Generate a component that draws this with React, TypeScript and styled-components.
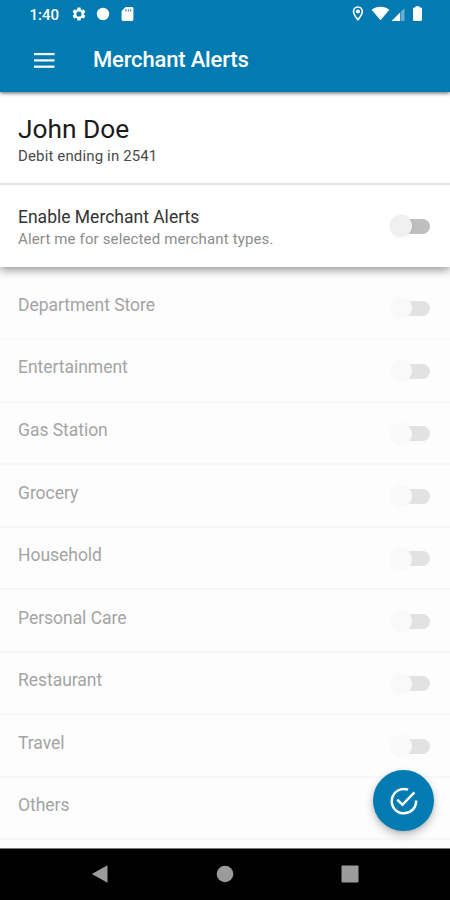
import React from "react";
import styled, { createGlobalStyle } from "styled-components";

const GlobalStyle = createGlobalStyle`
  * { box-sizing: border-box; }
  html, body { margin: 0; padding: 0; }
  body { font-family: Roboto, "Liberation Sans", sans-serif; background: #fff; }
`;

const BLUE = "#027bb2";

const Screen = styled.div`
  width: 450px;
  height: 900px;
  display: flex;
  flex-direction: column;
  overflow: hidden;
  background: #fefefe;
  position: relative;
`;

const Header = styled.header`
  height: 92px;
  flex: none;
  background: ${BLUE};
  color: #fff;
  box-shadow: 0 1px 4px rgba(0, 0, 0, 0.65);
  position: relative;
  z-index: 4;
`;

const StatusBar = styled.div`
  height: 28px;
  display: flex;
  align-items: center;
  padding: 0 27px 0 29.5px;
`;

const Clock = styled.span`
  width: 42.5px;
  font-size: 15px;
  font-weight: 500;
  line-height: 28px;
  padding-top: 1px;
`;

const StatusIcons = styled.div<{ $end?: boolean }>`
  display: flex;
  align-items: center;
  margin-left: ${(p) => (p.$end ? "auto" : "0")};
`;

const Toolbar = styled.div`
  height: 64px;
  display: flex;
  align-items: center;
  padding: 0 34px 1px;
`;

const MenuButton = styled.button`
  width: 59px;
  height: 24px;
  padding: 0;
  border: 0;
  background: none;
  color: inherit;
  text-align: left;
  line-height: 0;
`;

const Title = styled.h1`
  margin: 0;
  font-size: 22px;
  font-weight: 500;
  line-height: 28px;
  letter-spacing: -0.17px;
`;

const Account = styled.section`
  height: 91px;
  flex: none;
  padding: 20px 18px 0;
  background: #fff;
  position: relative;
  z-index: 3;
`;

const Name = styled.h2`
  margin: 0;
  font-size: 26.3px;
  font-weight: 400;
  line-height: 34px;
  color: #1c1c1c;
`;

const CardInfo = styled.p`
  margin: 0;
  font-size: 15px;
  line-height: 20px;
  letter-spacing: 0.14px;
  color: #4a4a4a;
`;

const EnableCard = styled.section`
  height: 84px;
  flex: none;
  display: flex;
  align-items: center;
  justify-content: space-between;
  padding: 0 20px 0 18px;
  border-top: 2px solid #e2e2e2;
  background: #fff;
  box-shadow: 0 3px 9px rgba(0, 0, 0, 0.42);
  position: relative;
  z-index: 2;
`;

const EnableText = styled.div`
  padding-top: 4px;
`;

const EnableTitle = styled.div`
  font-size: 17.5px;
  line-height: 22px;
  color: #333;
`;

const EnableHint = styled.div`
  font-size: 15px;
  line-height: 22px;
  letter-spacing: 0.14px;
  color: #8c8c8c;
`;

const Track = styled.div<{ $dim?: boolean }>`
  width: 40px;
  height: 22px;
  display: flex;
  align-items: center;
  flex: none;
  opacity: ${(p) => (p.$dim ? 0.5 : 1)};

  &::before {
    content: "";
    width: 22px;
    height: 22px;
    border-radius: 50%;
    background: ${(p) => (p.$dim ? "#f6f6f6" : "#f0f0f0")};
    box-shadow: 0 0 2px rgba(0, 0, 0, ${(p) => (p.$dim ? 0.03 : 0.1)});
    z-index: 1;
  }

  &::after {
    content: "";
    width: 27px;
    height: 15px;
    margin-left: -9px;
    border-radius: 8px;
    background: ${(p) => (p.$dim ? "#c8c8c8" : "#bebebe")};
  }
`;

const List = styled.ul`
  margin: 0;
  padding: 10.5px 0 0;
  list-style: none;
  flex: 1;
  background: #fdfdfd;
`;

const Row = styled.li`
  height: 62.55px;
  display: flex;
  justify-content: space-between;
  padding: 16.4px 20px 0 18px;
  background: #fdfdfd;
  border-bottom: 2px solid #f7f7f7;

  &:first-child {
    border-bottom-color: #fafafa;
  }

  ${Track} {
    margin-top: 3.6px;
  }
`;

const Category = styled.span`
  font-size: 17.5px;
  line-height: 22px;
  letter-spacing: -0.03px;
  color: #a4a4a4;
`;

const SaveButton = styled.button`
  position: absolute;
  right: 16px;
  bottom: 69px;
  width: 61px;
  height: 61px;
  border: 0;
  padding: 0;
  border-radius: 50%;
  background: ${BLUE};
  display: flex;
  align-items: center;
  justify-content: center;
  box-shadow: 0 4px 8px rgba(0, 0, 0, 0.25), 0 1px 3px rgba(0, 0, 0, 0.1);
  z-index: 4;
`;

const NavBar = styled.nav`
  height: 52px;
  flex: none;
  display: flex;
  align-items: center;
  justify-content: space-between;
  padding: 0 91px 1px;
  background: #000;
  border-top: 1px solid #777;
  position: relative;
  z-index: 3;
`;

const categories = [
  "Department Store",
  "Entertainment",
  "Gas Station",
  "Grocery",
  "Household",
  "Personal Care",
  "Restaurant",
  "Travel",
  "Others",
];

const StatusLeft = () => (
  <svg width="64" height="18" viewBox="0 0 64 18" fill="#fff">
    <g transform="translate(-1.2 0.8) scale(0.68)">
      <path
        fillRule="evenodd"
        d="M19.14 12.94c.04-.3.06-.61.06-.94s-.02-.64-.07-.94l2.03-1.58a.5.5 0 0 0 .12-.61l-1.92-3.32a.49.49 0 0 0-.59-.22l-2.39.96a7 7 0 0 0-1.62-.94l-.36-2.54a.48.48 0 0 0-.48-.41h-3.84a.47.47 0 0 0-.47.41l-.36 2.54c-.59.24-1.13.57-1.62.94l-2.39-.96a.48.48 0 0 0-.59.22L2.74 8.87a.47.47 0 0 0 .12.61l2.03 1.58a6 6 0 0 0-.02 1.88l-2.03 1.58a.5.5 0 0 0-.12.61l1.92 3.32c.12.22.37.29.59.22l2.39-.96c.5.38 1.03.7 1.62.94l.36 2.54c.05.24.24.41.48.41h3.84c.24 0 .44-.17.47-.41l.36-2.54c.59-.24 1.13-.56 1.62-.94l2.39.96c.22.08.47 0 .59-.22l1.92-3.32a.47.47 0 0 0-.12-.61zM12 15.8a3.8 3.8 0 1 1 0-7.6 3.8 3.8 0 0 1 0 7.6z"
      />
    </g>
    <circle cx="31" cy="9" r="6.2" />
    <path
      fillRule="evenodd"
      d="M53.6 2H60q1.4 0 1.4 1.4v11.2q0 1.4-1.4 1.4h-9q-1.4 0-1.4-1.4V6zM53.4 4.2h1v2.400h-1zm2.400 0h1v2.400h-1zm2.400 0h1v2.400h-1z"
    />
  </svg>
);

const StatusRight = () => (
  <svg width="71" height="18" viewBox="0 0 71 18" fill="#fff">
    <path
      d="M5.900 2C3.200 2 1.500 4 1.500 6.500c0 3 4.400 8.300 4.400 8.300s4.400-5.300 4.400-8.300C10.300 4 8.600 2 5.900 2z"
      fill="none"
      stroke="#fff"
      strokeWidth="1.600"
    />
    <circle cx="5.900" cy="6.500" r="2.100" />
    <path d="M19.600 4.800C24.500.700 32.500.700 37.400 4.800L28.500 15.200z" />
    <path d="M39.500 16L48 7.500V16z" />
    <path d="M48.600 7L52.500 3.200V16h-3.900z" opacity=".4" />
    <path d="M63.500 1.200h4v1.300h1q1.500 0 1.500 1.400v10.500q0 1.600-1.500 1.600h-6q-1.500 0-1.500-1.600V3.900q0-1.400 1.500-1.400h1z" />
  </svg>
);

const App = () => (
  <Screen>
    <GlobalStyle />
    <Header>
      <StatusBar>
        <Clock>1:40</Clock>
        <StatusIcons>
          <StatusLeft />
        </StatusIcons>
        <StatusIcons $end>
          <StatusRight />
        </StatusIcons>
      </StatusBar>
      <Toolbar>
        <MenuButton aria-label="Menu">
          <svg width="21" height="24" viewBox="0 0 21 24" fill="#fff">
            <rect y="5" width="20.500" height="2.200" />
            <rect y="11.300" width="20.500" height="2.200" />
            <rect y="17.600" width="20.500" height="2.200" />
          </svg>
        </MenuButton>
        <Title>Merchant Alerts</Title>
      </Toolbar>
    </Header>
    <Account>
      <Name>John Doe</Name>
      <CardInfo>Debit ending in 2541</CardInfo>
    </Account>
    <EnableCard>
      <EnableText>
        <EnableTitle>Enable Merchant Alerts</EnableTitle>
        <EnableHint>Alert me for selected merchant types.</EnableHint>
      </EnableText>
      <Track />
    </EnableCard>
    <List>
      {categories.map((name) => (
        <Row key={name}>
          <Category>{name}</Category>
          <Track $dim />
        </Row>
      ))}
    </List>
    <SaveButton aria-label="Save">
      <svg width="30" height="30" viewBox="0 0 30 30" fill="none" stroke="#fff" strokeWidth="2.500">
        <path d="M19.100 3.700A12.200 12.200 0 1 0 27.100 14.500" />
        <path d="M8.300 13.700l5.100 5.100L25.400 6.400" />
      </svg>
    </SaveButton>
    <NavBar>
      <svg width="17" height="20" viewBox="0 0 17 20">
        <path d="M.8 10L16.500 1.200v17.600z" fill="#9b9b9b" />
      </svg>
      <svg width="18" height="18" viewBox="0 0 18 18">
        <circle cx="9" cy="9" r="8.300" fill="#9b9b9b" />
      </svg>
      <svg width="18" height="18" viewBox="0 0 18 18">
        <rect x=".5" y=".5" width="17" height="17" rx="1" fill="#9b9b9b" />
      </svg>
    </NavBar>
  </Screen>
);

export default App;
